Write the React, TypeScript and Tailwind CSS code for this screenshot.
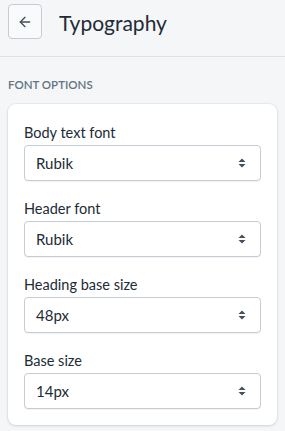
import { ArrowLeft } from 'lucide-react';

const fields = [
  { label: 'Body text font', value: 'Rubik' },
  { label: 'Header font', value: 'Rubik' },
  { label: 'Heading base size', value: '48px' },
  { label: 'Base size', value: '14px' },
];

function SelectField({ label, value }: { label: string; value: string }) {
  return (
    <div>
      <div className="text-[14.5px] leading-[20px] text-[#212b36] mb-[2px]">{label}</div>
      <div className="h-[36px] rounded-[4px] border border-[#c4cdd5] bg-white flex items-center justify-between pl-[11px] pr-[14px] shadow-[0_1px_0_rgba(22,29,37,0.05)]">
        <span className="text-[15px] text-[#212b36]">{value}</span>
        <svg width="8" height="12" viewBox="0 0 8 12" className="text-[#454f5b]">
          <path d="M4 1.5 L7.5 5 H0.5 Z" fill="currentColor" />
          <path d="M4 10.5 L7.5 7 H0.5 Z" fill="currentColor" />
        </svg>
      </div>
    </div>
  );
}

export default function App() {
  return (
    <div
      className="min-h-[431px] w-[285px] bg-[#f4f6f8]"
      style={{ fontFamily: 'Lato, "Noto Sans", sans-serif' }}
    >
      {/* Header */}
      <div className="h-[57px] border-b border-[#dfe3e8] flex items-start pt-[4px] px-[8px] gap-[17px]">
        <button className="w-[34px] h-[35px] rounded-[4px] border border-[#c4cdd5] bg-[#f9fafb] flex items-center justify-center text-[#454f5b]">
          <ArrowLeft className="w-[16px] h-[16px]" strokeWidth={2} />
        </button>
        <h1 className="text-[21px] leading-[37px] text-[#212b36]">Typography</h1>
      </div>

      <div className="px-[8px]">
        <div className="pt-[20px] pb-[11px] text-[11.5px] leading-[16px] font-semibold uppercase text-[#637381]">
          Font options
        </div>

        {/* Card */}
        <div className="bg-white rounded-[8px] shadow-[0_0_0_1px_rgba(63,63,68,0.05),0_1px_3px_0_rgba(63,63,68,0.15)] pt-[19px] pb-[16px] px-[16px] flex flex-col gap-[18px]">
          {fields.map((f) => (
            <SelectField key={f.label} label={f.label} value={f.value} />
          ))}
        </div>
      </div>
    </div>
  );
}
